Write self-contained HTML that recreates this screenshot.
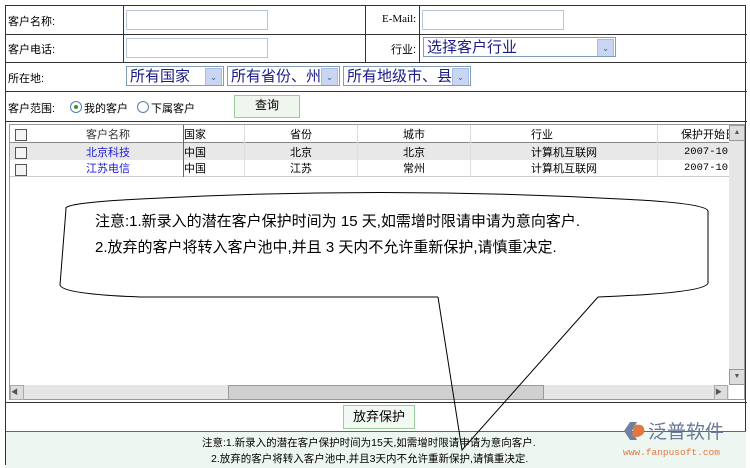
<!DOCTYPE html>
<html><head><meta charset="utf-8"><style>
body{margin:0;width:750px;height:467px;background:#fff;font-family:"Liberation Sans","Noto Sans CJK SC",sans-serif;font-size:11px;color:#000;position:relative;overflow:hidden}
.a{position:absolute}
.ln{position:absolute;background:#333}
.inp{position:absolute;border:1px solid #b8c8d8;background:#fff;height:18px}
.sel{position:absolute;border:1px solid #7f9db9;background:#fff;height:20px;font-size:15px;color:#1a1a8a;line-height:20px;padding-left:3px;box-sizing:border-box;white-space:nowrap;overflow:hidden}
.sel i{position:absolute;right:1px;top:1px;width:15px;height:16px;background:#c8d6f3;border:1px solid #a8bce0;font-style:normal;font-size:9px;line-height:16px;text-align:center;color:#4d6185}
.cb{position:absolute;width:10px;height:10px;border:1px solid #555;background:#f4f4f4}
.t{position:absolute;white-space:nowrap}
</style></head><body>
<div class="a" style="left:5px;top:5px;width:741px;height:460px;border:1px solid #333;border-bottom:none;box-sizing:border-box"></div>
<div class="ln" style="left:5px;top:34px;width:742px;height:1px"></div>
<div class="ln" style="left:5px;top:62px;width:742px;height:1px"></div>
<div class="ln" style="left:5px;top:91px;width:742px;height:1px"></div>
<div class="ln" style="left:5px;top:121px;width:742px;height:1px"></div>
<div class="ln" style="left:123px;top:5px;width:1px;height:57px"></div>
<div class="ln" style="left:365px;top:5px;width:1px;height:57px"></div>
<div class="ln" style="left:419px;top:5px;width:1px;height:57px"></div>
<div class="t" style="left:8px;top:13px">客户名称:</div>
<div class="t" style="left:8px;top:41px">客户电话:</div>
<div class="t" style="left:8px;top:70px">所在地:</div>
<div class="t" style="left:8px;top:100px">客户范围:</div>
<div class="t" style="left:382px;top:13px;font-family:'Liberation Serif',serif">E-Mail:</div>
<div class="t" style="left:391px;top:41px">行业:</div>
<div class="inp" style="left:126px;top:10px;width:140px"></div>
<div class="inp" style="left:126px;top:38px;width:140px"></div>
<div class="inp" style="left:422px;top:10px;width:140px"></div>
<div class="sel" style="left:423px;top:37px;width:193px">选择客户行业<i>⌄</i></div>
<div class="sel" style="left:126px;top:66px;width:98px">所有国家<i>⌄</i></div>
<div class="sel" style="left:227px;top:66px;width:113px">所有省份、州<i>⌄</i></div>
<div class="sel" style="left:343px;top:66px;width:128px">所有地级市、县<i>⌄</i></div>
<div class="a" style="left:70px;top:101px;width:10px;height:10px;border:1px solid #5a7ca8;border-radius:50%;background:#fff"><div class="a" style="left:3px;top:3px;width:4px;height:4px;border-radius:50%;background:#2a9a2a"></div></div>
<div class="t" style="left:84px;top:100px">我的客户</div>
<div class="a" style="left:137px;top:101px;width:10px;height:10px;border:1px solid #5a7ca8;border-radius:50%;background:#fff"></div>
<div class="t" style="left:151px;top:100px">下属客户</div>
<div class="a" style="left:234px;top:95px;width:64px;height:21px;border:1px solid #9c9;background:#eef6ee;text-align:center;line-height:19px;font-size:12px">查询</div>
<div class="a" style="left:9px;top:124px;width:736px;height:276px;border:1px solid #999;box-sizing:border-box"></div>
<div class="a" style="left:10px;top:143px;width:719px;height:17px;background:#e8e8e8"></div>
<div class="a" style="left:10px;top:142px;width:719px;height:1px;background:#888"></div>
<div class="a" style="left:10px;top:176px;width:719px;height:1px;background:#ccc"></div>
<div class="a" style="left:183px;top:125px;width:1px;height:52px;background:#666"></div>
<div class="a" style="left:244px;top:125px;width:1px;height:52px;background:#ddd"></div>
<div class="a" style="left:357px;top:125px;width:1px;height:52px;background:#ddd"></div>
<div class="a" style="left:470px;top:125px;width:1px;height:52px;background:#ddd"></div>
<div class="a" style="left:657px;top:125px;width:1px;height:52px;background:#ddd"></div>
<div class="cb" style="left:15px;top:129px"></div>
<div class="cb" style="left:15px;top:147px"></div>
<div class="cb" style="left:15px;top:164px"></div>
<div class="t" style="left:86px;top:126px;color:#333">客户名称</div>
<div class="t" style="left:86px;top:144px;color:#1c1cd8">北京科技</div>
<div class="t" style="left:86px;top:160px;color:#1c1cd8">江苏电信</div>
<div class="t" style="left:184px;top:126px">国家</div>
<div class="t" style="left:184px;top:144px">中国</div>
<div class="t" style="left:184px;top:160px">中国</div>
<div class="t" style="left:290px;top:126px">省份</div>
<div class="t" style="left:290px;top:144px">北京</div>
<div class="t" style="left:290px;top:160px">江苏</div>
<div class="t" style="left:403px;top:126px">城市</div>
<div class="t" style="left:403px;top:144px">北京</div>
<div class="t" style="left:403px;top:160px">常州</div>
<div class="t" style="left:531px;top:126px">行业</div>
<div class="t" style="left:531px;top:144px">计算机互联网</div>
<div class="t" style="left:531px;top:160px">计算机互联网</div>
<div class="t" style="left:681px;top:126px">保护开始日</div>
<div class="t" style="left:684px;top:146px;font-family:'Liberation Mono',monospace;font-size:10.5px">2007-10-</div>
<div class="t" style="left:684px;top:162px;font-family:'Liberation Mono',monospace;font-size:10.5px">2007-10-</div>
<div class="a" style="left:729px;top:125px;width:15px;height:260px;background:#e6e6e6"></div>
<div class="a" style="left:729px;top:125px;width:14px;height:14px;background:#ddd;border:1px solid #999;font-size:7px;text-align:center;line-height:14px;color:#555">▲</div>
<div class="a" style="left:729px;top:369px;width:14px;height:14px;background:#ddd;border:1px solid #999;font-size:7px;text-align:center;line-height:14px;color:#555">▼</div>
<div class="a" style="left:10px;top:385px;width:719px;height:14px;background:#e6e6e6"></div>
<div class="a" style="left:10px;top:385px;width:12px;height:13px;background:#ddd;border:1px solid #aaa;font-size:7px;line-height:13px;color:#555">◀</div>
<div class="a" style="left:228px;top:385px;width:314px;height:13px;background:#d0d0d0;border:1px solid #999"></div>
<div class="a" style="left:714px;top:385px;width:12px;height:13px;background:#ddd;border:1px solid #aaa;font-size:7px;line-height:13px;color:#555">▶</div>
<div class="ln" style="left:5px;top:402px;width:742px;height:1px"></div>
<div class="a" style="left:343px;top:405px;width:70px;height:22px;border:1px solid #9c9;background:#f2f8f2;text-align:center;line-height:21px;font-size:13px">放弃保护</div>
<div class="a" style="left:6px;top:431px;width:740px;height:36px;background:#eef6f1;border-top:1px solid #666"></div>
<div class="t" style="left:202px;top:435px;font-size:10.5px">注意:1.新录入的潜在客户保护时间为15天,如需增时限请申请为意向客户.</div>
<div class="t" style="left:211px;top:451px;font-size:10.5px">2.放弃的客户将转入客户池中,并且3天内不允许重新保护,请慎重决定.</div>
<svg class="a" style="left:0;top:0" width="750" height="467">
<path d="M438 297 L140 297 Q62 294 60 285 L66 209 Q62 203 140 199 Q380 186 620 199 Q706 203 708 211 L708 283 Q706 292 620 296 L598 297 Z" fill="#fff" stroke="none"/>
<path d="M438 297 L140 297 Q62 294 60 285 L66 209 Q62 203 140 199 Q380 186 620 199 Q706 203 708 211 L708 283 Q706 292 620 296 L598 297" fill="none" stroke="#000" stroke-width="1"/>
<path d="M438 297 L462 450 L598 297" fill="none" stroke="#000" stroke-width="1"/>
<text x="95" y="226" font-size="15" font-family="Liberation Sans,Noto Sans CJK SC,sans-serif">注意:1.新录入的潜在客户保护时间为 15 天,如需增时限请申请为意向客户.</text>
<text x="95" y="252" font-size="15" font-family="Liberation Sans,Noto Sans CJK SC,sans-serif">2.放弃的客户将转入客户池中,并且 3 天内不允许重新保护,请慎重决定.</text>
<path d="M630 422 L624 431 L630 440 L637 440 L632 431 L637 422Z" fill="#7080a0"/>
<path d="M634 425 Q646 423 644 433 Q639 439 632 436Z" fill="#e07840"/>
<text x="648" y="438" font-size="19" fill="#6a7a98" font-family="Noto Sans CJK SC,sans-serif">泛普软件</text>
<text x="623" y="455" font-size="9.5" fill="#e07840" font-family="Liberation Mono,monospace">www.fanpusoft.com</text>
</svg>
</body></html>
